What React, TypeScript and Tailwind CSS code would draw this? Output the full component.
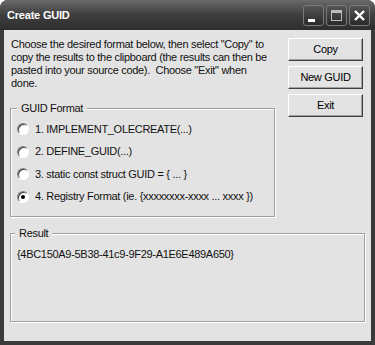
const options = [
  "1. IMPLEMENT_OLECREATE(...)",
  "2. DEFINE_GUID(...)",
  "3. static const struct GUID = { ... }",
  "4. Registry Format (ie. {xxxxxxxx-xxxx ... xxxx })",
];

function TitleButton({ children }: { children: React.ReactNode }) {
  return (
    <div className="flex h-[21px] w-[21px] items-center justify-center rounded-[3px] border border-[#7a7a7a] bg-gradient-to-b from-[#555] to-[#2a2a2a]">
      {children}
    </div>
  );
}

function Radio({ checked }: { checked?: boolean }) {
  return (
    <div className="flex h-[12px] w-[12px] items-center justify-center rounded-full border border-t-[#808080] border-l-[#808080] border-b-white border-r-white bg-white shadow-[inset_1px_1px_0_#404040]">
      {checked && <div className="h-[4px] w-[4px] rounded-full bg-black" />}
    </div>
  );
}

function Button({ label }: { label: string }) {
  return (
    <button className="h-[23px] w-[75px] border border-t-white border-l-white border-b-[#404040] border-r-[#404040] bg-[#e3e3e3] text-[11px] tracking-[-0.3px] text-black shadow-[inset_-1px_-1px_0_#a0a0a0]">
      {label}
    </button>
  );
}

export default function App() {
  return (
    <div
      className="h-[345px] w-[375px] bg-white"
      style={{ fontFamily: '"Liberation Sans", Arial, sans-serif' }}
    >
      <div className="flex h-full flex-col rounded-t-[8px] bg-[#3a3a3a]">
        <div className="flex h-[30px] items-center rounded-t-[8px] bg-gradient-to-b from-[#6a6a6a] via-[#3e3e3e] to-[#2e2e2e] pl-[7px] pr-[5px]">
          <span className="flex-1 text-[11px] font-bold tracking-[-0.2px] text-white">Create GUID</span>
          <div className="flex gap-[2px]">
            <TitleButton>
              <div className="mt-[10px] mr-[4px] h-[3px] w-[7px] bg-white" />
            </TitleButton>
            <TitleButton>
              <div className="h-[11px] w-[11px] border border-t-[3px] border-[#bdbdbd]" />
            </TitleButton>
            <TitleButton>
              <svg width="13" height="13" viewBox="0 0 13 13">
                <path d="M2 2 L11 11 M11 2 L2 11" stroke="white" strokeWidth="2.4" />
              </svg>
            </TitleButton>
          </div>
        </div>

        <div className="mx-[4px] mb-[4px] flex flex-1 flex-col bg-[#e3e3e3] pt-[8px] pl-[6px] text-[11px] leading-[13px] tracking-[-0.3px] text-[#111]">
          <div className="flex">
            <div className="w-[265px]">
              <p className="ml-[1px] h-[64px] whitespace-nowrap">
                Choose the desired format below, then select "Copy" to
                <br />
                copy the results to the clipboard (the results can then be
                <br />
                pasted into your source code).&nbsp; Choose "Exit" when
                <br />
                done.
              </p>
              <fieldset className="h-[115px] border border-[#a0a0a0] pl-[6px] pt-[3px] shadow-[inset_1px_1px_0_#fff,1px_1px_0_#fff]">
                <legend className="bg-[#e3e3e3] px-[4px]">GUID Format</legend>
                {options.map((o, i) => (
                  <div key={o} className="flex h-[22.5px] items-center gap-[6px]">
                    <Radio checked={i === 3} />
                    <span>{o}</span>
                  </div>
                ))}
              </fieldset>
            </div>
            <div className="ml-[13px] flex flex-col gap-[5px]">
              <Button label="Copy" />
              <Button label="New GUID" />
              <Button label="Exit" />
            </div>
          </div>

          <fieldset className="mt-[10px] h-[95px] w-[355px] border border-[#a0a0a0] pl-[6px] pt-[8px] shadow-[inset_1px_1px_0_#fff,1px_1px_0_#fff]">
            <legend className="ml-[-2px] bg-[#e3e3e3] px-[4px]">Result</legend>
            <p>{"{4BC150A9-5B38-41c9-9F29-A1E6E489A650}"}</p>
          </fieldset>
        </div>
      </div>
    </div>
  );
}
